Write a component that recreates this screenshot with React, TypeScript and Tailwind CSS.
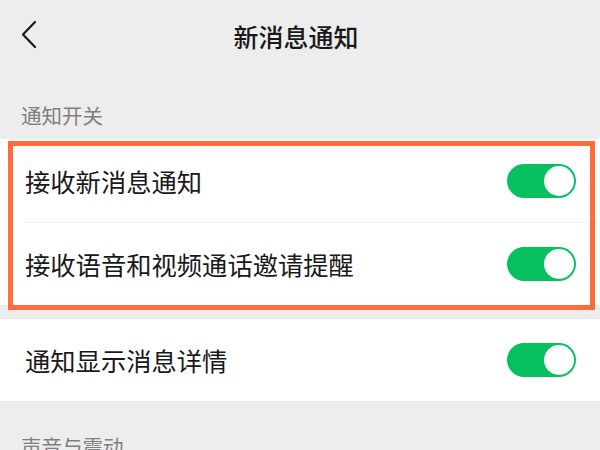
import React from "react";

const Toggle = () => (
  <div className="w-[69px] h-[34px] rounded-full bg-[#07c160] flex items-center justify-end pr-[2px] shrink-0">
    <div className="w-[30px] h-[30px] rounded-full bg-white" />
  </div>
);

const Row = ({ label, h }: { label: string; h: string }) => (
  <div className={`flex items-center justify-between pl-[25px] pr-[24px] ${h}`}>
    <span className="text-[25.3px] leading-[32px] text-[#191919]">{label}</span>
    <Toggle />
  </div>
);

export default function App() {
  return (
    <div
      className="relative w-[600px] h-[450px] overflow-hidden bg-[#ededed]"
      style={{ fontFamily: '"Noto Sans CJK SC", "Noto Sans", sans-serif' }}
    >
      <div className="relative h-[72px] flex items-center justify-center pr-[8px]">
        <svg
          className="absolute left-[20px] top-[20px]"
          width="18"
          height="30"
          viewBox="0 0 18 30"
          fill="none"
        >
          <path d="M15 2 L3 14.5 L15 27" stroke="#191919" strokeWidth="2.2" strokeLinecap="round" strokeLinejoin="round" />
        </svg>
        <span className="text-[25px] leading-[32px] font-medium text-[#191919]">新消息通知</span>
      </div>
      <div className="pt-[29px] pb-[10px] pl-[21px] text-[20.5px] leading-[28px] text-[#7f7f7f]">通知开关</div>
      <div className="bg-white">
        <Row label="接收新消息通知" h="h-[83px]" />
        <div className="ml-[24px] h-px bg-[#f0f0f0]" />
        <Row label="接收语音和视频通话邀请提醒" h="h-[82px]" />
      </div>
      <div className="h-[14px]" />
      <div className="bg-white">
        <Row label="通知显示消息详情" h="h-[82px]" />
      </div>
      <div className="pt-[31px] pl-[21px] text-[20.5px] leading-[28px] text-[#7f7f7f]">声音与震动</div>
      <div className="absolute left-[8px] top-[141px] w-[587px] h-[169px] border-[5px] border-[#fd6c3c] pointer-events-none" />
    </div>
  );
}
